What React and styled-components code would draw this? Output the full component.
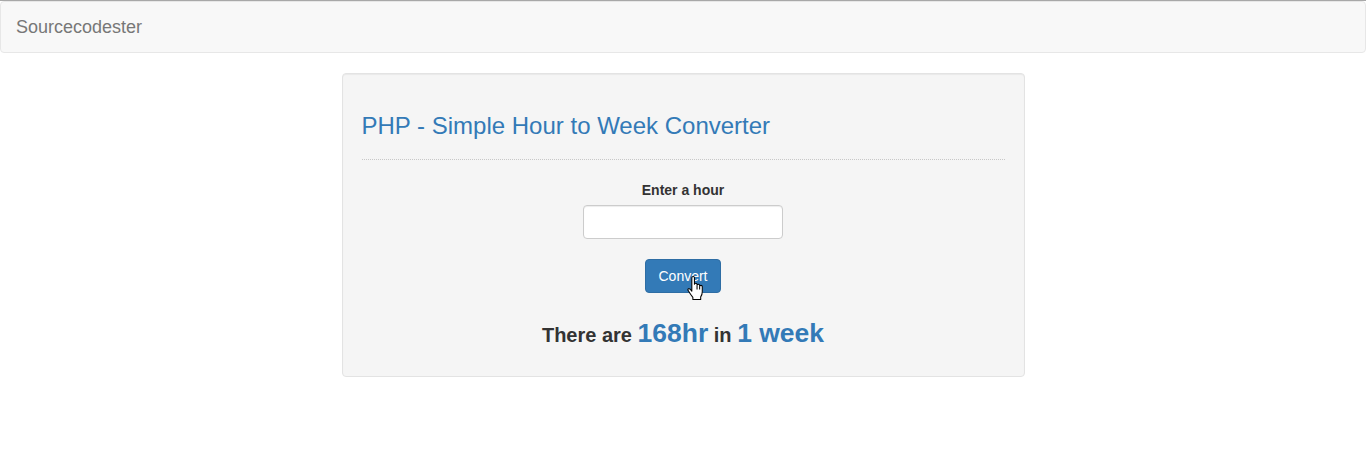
import React from "react";
import styled, { createGlobalStyle } from "styled-components";

const Global = createGlobalStyle`
  html, body {
    margin: 0;
    padding: 0;
    background: #fff;
  }
  body {
    border-top: 1px solid #a8a8a8;
    font-family: "Liberation Sans", Arial, sans-serif;
    font-size: 14px;
    line-height: 1.42857;
    color: #333;
  }
`;

const Navbar = styled.nav`
  min-height: 50px;
  margin-bottom: 20px;
  background: #f8f8f8;
  border: 1px solid #e7e7e7;
  border-radius: 4px;
  display: flex;
  align-items: center;
`;

const Brand = styled.a`
  padding: 15px;
  font-size: 18px;
  line-height: 20px;
  color: #777;
  text-decoration: none;
`;

const Row = styled.div`
  display: flex;
  justify-content: center;
`;

const Col = styled.div`
  width: 50%;
`;

const Well = styled.div`
  padding: 19px;
  background: #f5f5f5;
  border: 1px solid #e3e3e3;
  border-radius: 4px;
  box-shadow: inset 0 1px 1px rgba(0, 0, 0, 0.05);
`;

const Title = styled.h3`
  margin: 20px 0 10px;
  font-size: 24px;
  font-weight: 500;
  line-height: 1.1;
  color: #337ab7;
`;

const Rule = styled.hr`
  margin: 20px 0;
  border: 0;
  border-top: 1px dotted #c8c8c8;
`;

const Form = styled.form`
  text-align: center;
`;

const Group = styled.div`
  margin-bottom: 15px;
`;

const Label = styled.label`
  display: inline-block;
  margin-top: 1px;
  margin-bottom: 4px;
  font-weight: bold;
`;

const Input = styled.input`
  display: block;
  box-sizing: border-box;
  width: 200px;
  height: 34px;
  margin: 0 auto;
  padding: 6px 12px;
  font: inherit;
  background: #fff;
  border: 1px solid #ccc;
  border-radius: 4px;
  box-shadow: inset 0 1px 1px rgba(0, 0, 0, 0.075);
`;

const ButtonWrap = styled.div`
  position: relative;
  display: inline-block;
  margin-top: 5px;
`;

const Button = styled.button`
  padding: 7px 12px 5px;
  font-family: inherit;
  font-size: 14px;
  line-height: 1.42857;
  color: #fff;
  background: #337ab7;
  border: 1px solid #2e6da4;
  border-radius: 4px;
  cursor: pointer;
`;

const Pointer = styled.svg`
  position: absolute;
  left: 42px;
  top: 17px;
  pointer-events: none;
`;

const Result = styled.h3`
  margin: 26px 0 8px;
  font-size: 20px;
  font-weight: bold;
  line-height: 1.1;
  color: #333;
  text-align: center;
`;

const Value = styled.span`
  font-size: 26.5px;
  color: #337ab7;
`;

export default function App() {
  return (
    <>
      <Global />
      <Navbar>
        <Brand href="#">Sourcecodester</Brand>
      </Navbar>
      <Row>
        <Col>
          <Well>
            <Title>PHP - Simple Hour to Week Converter</Title>
            <Rule />
            <Form onSubmit={(e) => e.preventDefault()}>
              <Group>
                <Label>Enter a hour</Label>
                <Input type="number" />
              </Group>
              <ButtonWrap>
                <Button type="submit">Convert</Button>
                <Pointer width="18" height="24" viewBox="0 0 17 23">
                  <path
                    d="M4.5 1.5Q4.5 0.5 5.75 0.5Q7 0.5 7 1.5V8Q7 7 8.25 7Q9.5 7 9.5 8V9Q9.5 8 10.75 8Q12 8 12 9V10Q12 9 13.25 9Q14.5 9 14.5 10V15Q14.5 18 13 20V22.5H5.5V20.5Q3 17.5 1 14Q0.3 12.8 1.3 12.3Q2.3 11.8 3.3 13L4.5 14.5Z"
                    fill="#fff"
                    stroke="#000"
                    strokeWidth="1"
                    strokeLinejoin="round"
                  />
                  <path d="M9.5 9.5V13M12 10.5V13" stroke="#000" strokeWidth="1" />
                </Pointer>
              </ButtonWrap>
            </Form>
            <Result>
              There are <Value>168hr</Value> in <Value>1 week</Value>
            </Result>
          </Well>
        </Col>
      </Row>
    </>
  );
}
